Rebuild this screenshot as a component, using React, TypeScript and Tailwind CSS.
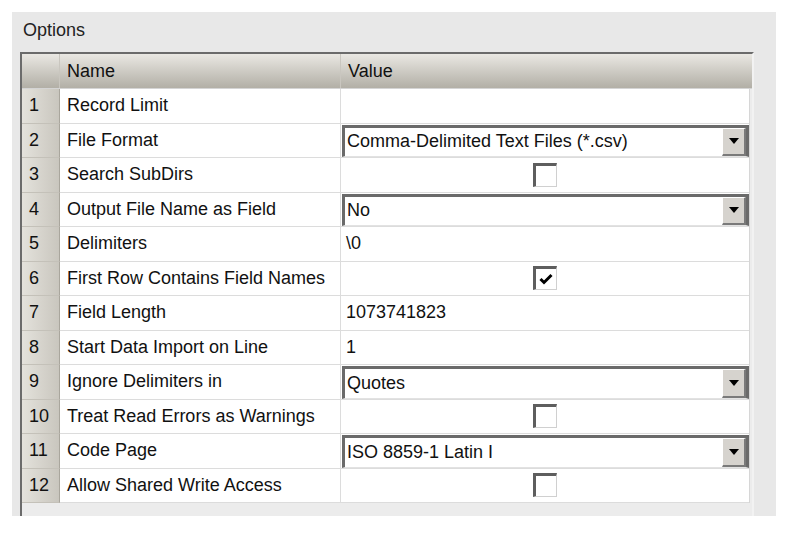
import React from "react";

type Row =
  | { n: number; name: string; kind: "text"; value: string }
  | { n: number; name: string; kind: "select"; value: string }
  | { n: number; name: string; kind: "check"; checked: boolean };

const rows: Row[] = [
  { n: 1, name: "Record Limit", kind: "text", value: "" },
  { n: 2, name: "File Format", kind: "select", value: "Comma-Delimited Text Files (*.csv)" },
  { n: 3, name: "Search SubDirs", kind: "check", checked: false },
  { n: 4, name: "Output File Name as Field", kind: "select", value: "No" },
  { n: 5, name: "Delimiters", kind: "text", value: "\\0" },
  { n: 6, name: "First Row Contains Field Names", kind: "check", checked: true },
  { n: 7, name: "Field Length", kind: "text", value: "1073741823" },
  { n: 8, name: "Start Data Import on Line", kind: "text", value: "1" },
  { n: 9, name: "Ignore Delimiters in", kind: "select", value: "Quotes" },
  { n: 10, name: "Treat Read Errors as Warnings", kind: "check", checked: false },
  { n: 11, name: "Code Page", kind: "select", value: "ISO 8859-1 Latin I" },
  { n: 12, name: "Allow Shared Write Access", kind: "check", checked: false },
];

function Select({ value }: { value: string }) {
  return (
    <div className="flex h-full w-full items-stretch border-t-[3px] border-l-[3px] border-r-[3px] border-b border-t-[#6a6a6a] border-l-[#6a6a6a] border-r-[#6a6a6a] border-b-[#e2e2e2] bg-white">
      <div className="flex flex-1 items-center pl-[2px] text-[#111]">{value}</div>
      <div className="flex w-[24px] items-center justify-center border-t border-l border-t-white border-l-white border-b-2 border-r-2 border-b-[#7a7a7a] border-r-[#7a7a7a] bg-[#d6d3ce]">
        <svg width="12" height="8" viewBox="0 0 12 8">
          <polygon points="1,1 11,1 6,7" fill="#000" />
        </svg>
      </div>
    </div>
  );
}

function Check({ checked }: { checked: boolean }) {
  return (
    <div className="flex h-[24px] w-[24px] items-center justify-center border-t-[3px] border-l-[3px] border-b border-r border-t-[#5e5e5e] border-l-[#5e5e5e] border-b-[#d0d0d0] border-r-[#d0d0d0] bg-white">
      {checked && (
        <svg width="14" height="12" viewBox="0 0 14 12">
          <path d="M1.5 6 L5 9.5 L12.5 2" stroke="#000" strokeWidth="3" fill="none" />
        </svg>
      )}
    </div>
  );
}

export default function App() {
  return (
    <div
      className="h-[534px] w-[806px] bg-white pl-[12px] pt-[12px]"
      style={{ fontFamily: '"Liberation Sans", Arial, sans-serif' }}
    >
      <div className="flex h-[504px] w-[764px] flex-col bg-[#e8e8e8] text-[18px] text-[#111]">
        <div className="h-[40px] pl-[11px] pt-[7px] leading-[22px] text-[#222]">Options</div>
        <div className="ml-[8px] flex h-[464px] w-[734px] flex-col overflow-hidden border-t-2 border-l-2 border-r-2 border-t-[#6b6b6b] border-l-[#6b6b6b] border-r-[#f2f2f2] bg-[#ececec]">
          <div className="flex h-[35px] w-[730px] shrink-0 border-b border-b-[#d4d4d4] bg-gradient-to-b from-[#eae8e3] to-[#b2afa6]">
            <div className="w-[38px] border-r border-r-[#c9c6bf]"></div>
            <div className="flex w-[281px] items-center border-r border-r-[#c9c6bf] pl-[7px]">Name</div>
            <div className="flex w-[409px] items-center pl-[7px]">Value</div>
          </div>
          {rows.map((r) => (
            <div key={r.n} className="flex h-[34.5px] w-[728px] shrink-0 border-r border-r-[#d6d6d6] bg-white">
              <div className="flex w-[38px] items-center border-b border-r border-b-[#c4c1b9] border-r-[#a9a69d] bg-gradient-to-r from-[#e4e2dc] to-[#c9c6be] pl-[7px]">
                {r.n}
              </div>
              <div className="flex w-[281px] items-center border-b border-r border-b-[#dcdcdc] border-r-[#dcdcdc] pl-[7px]">
                {r.name}
              </div>
              <div className="flex w-[408px] items-center border-b border-b-[#dcdcdc]">
                {r.kind === "text" && <div className="pl-[5px]">{r.value}</div>}
                {r.kind === "select" && (
                  <div className="h-full w-full pl-[1px] pt-[1px]">
                    <Select value={r.value} />
                  </div>
                )}
                {r.kind === "check" && (
                  <div className="flex w-full justify-center">
                    <Check checked={r.checked} />
                  </div>
                )}
              </div>
            </div>
          ))}
        </div>
      </div>
    </div>
  );
}
